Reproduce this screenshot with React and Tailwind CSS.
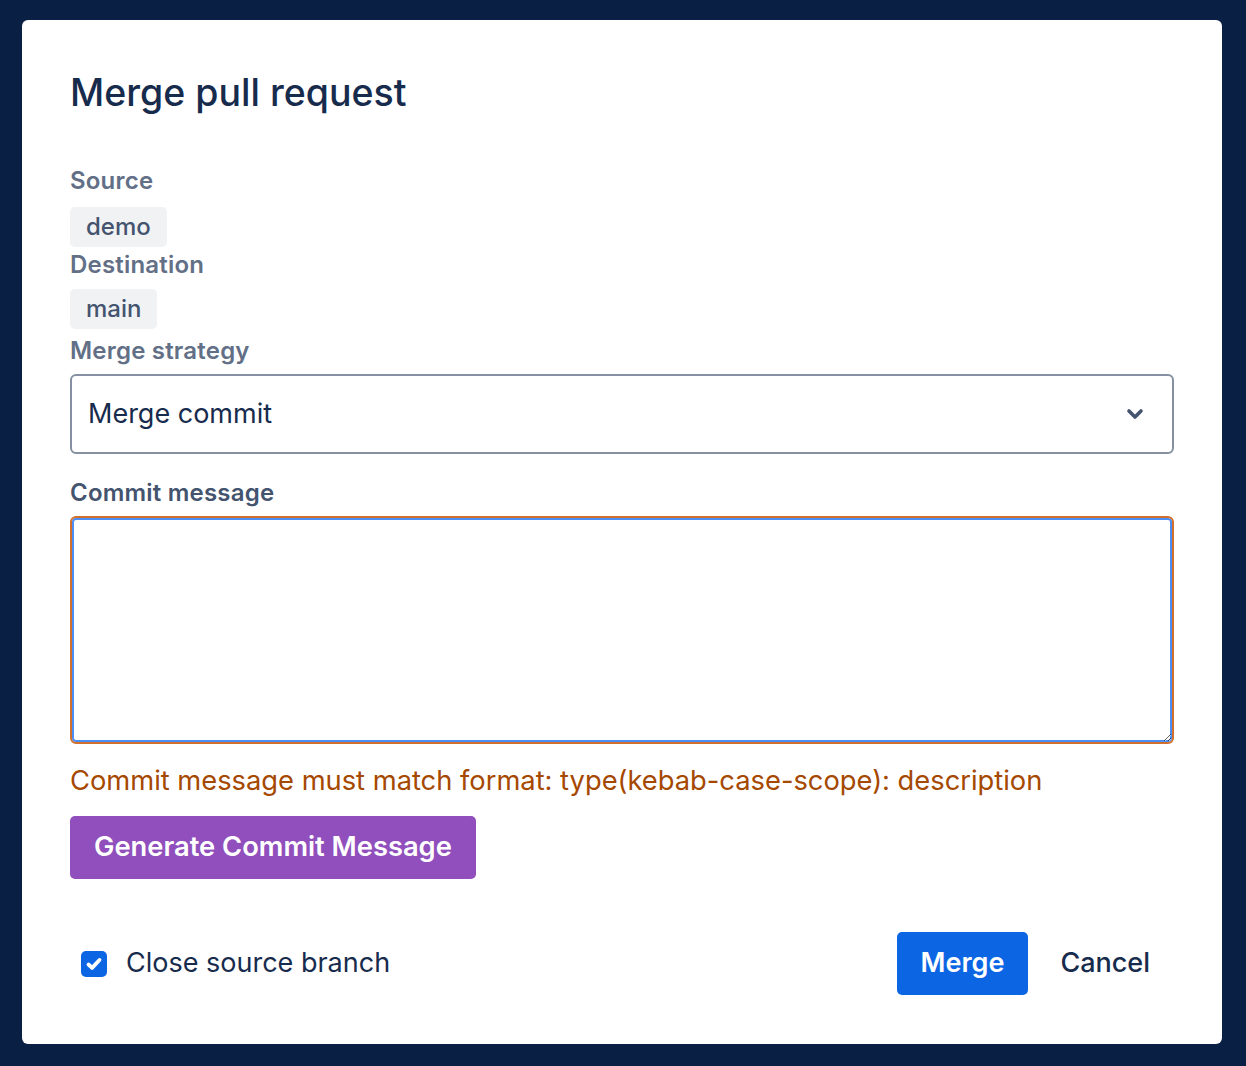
import React from 'react';

const FONT = { fontFamily: 'Inter, "Noto Sans", "Liberation Sans", sans-serif' };

const Label = ({ children, className = '' }) => (
  <div className={`text-[24px] leading-[28px] font-semibold tracking-[0.2px] ${className}`}>{children}</div>
);

const Badge = ({ children }) => (
  <div className="inline-flex h-[40px] items-center rounded-[5px] bg-[#f1f2f4] px-4 text-[24px] font-medium text-[#44546f]">
    {children}
  </div>
);

export default function App() {
  return (
    <div className="min-h-[1066px] w-full bg-[#0a1f44] pt-5 pl-[22px]" style={FONT}>
      <div className="w-[1200px] rounded-[6px] bg-white px-12 pt-12 pb-[49px]">
        <h1 className="mt-[2px] text-[37.5px] font-medium leading-[46px] text-[#172b4d]">Merge pull request</h1>

        <div className="mt-[51px] flex flex-col items-start">
          <Label className="mb-[12px] text-[#626f86]">Source</Label>
          <Badge>demo</Badge>
          <Label className="mt-[4px] mb-[10px] text-[#626f86]">Destination</Label>
          <Badge>main</Badge>
          <Label className="mt-[8px] mb-[9px] text-[#626f86]">Merge strategy</Label>
        </div>

        <div className="box-border flex h-[80px] w-full items-center justify-between rounded-[6px] border-2 border-[#8590a2] pl-4 pr-[27px]">
          <span className="text-[27px] text-[#172b4d]">Merge commit</span>
          <svg width="20" height="14" viewBox="0 0 20 14" fill="none">
            <path d="M4 4l6 6 6-6" stroke="#44546f" strokeWidth="3.6" strokeLinecap="round" strokeLinejoin="round" />
          </svg>
        </div>

        <Label className="mt-[25px] mb-[9px] text-[#44546f]">Commit message</Label>
        <textarea
          className="block h-[228px] w-full resize-y rounded-[6px] border-2 border-[#d0702c] shadow-[inset_0_0_0_2px_#4c8df6] outline-none"
          defaultValue=""
        />

        <p className="mt-[18px] text-[27.3px] leading-[38px] text-[#a54800]">
          Commit message must match format: type(kebab-case-scope): description
        </p>

        <button className="mt-[16px] h-[63px] rounded-[5px] bg-[#904fbd] px-6 text-[27.3px] font-semibold text-white">
          Generate Commit Message
        </button>

        <div className="mt-[53px] flex items-center justify-between">
          <label className="flex items-center gap-[19px] pl-[11px]">
            <span className="flex h-[26px] w-[26px] items-center justify-center rounded-[5px] bg-[#0c66e4]">
              <svg width="20" height="20" viewBox="0 0 20 20" fill="none">
                <path d="M4.5 10.5l3.6 3.4L15.5 6" stroke="white" strokeWidth="3.8" strokeLinecap="round" strokeLinejoin="round" />
              </svg>
            </span>
            <span className="text-[27px] text-[#172b4d]">Close source branch</span>
          </label>
          <div className="flex items-center gap-2">
            <button className="h-[63px] rounded-[5px] bg-[#0c66e4] px-6 text-[27px] font-semibold text-white">Merge</button>
            <button className="h-[63px] rounded-[5px] px-6 text-[27px] font-medium text-[#172b4d]">Cancel</button>
          </div>
        </div>
      </div>
    </div>
  );
}
